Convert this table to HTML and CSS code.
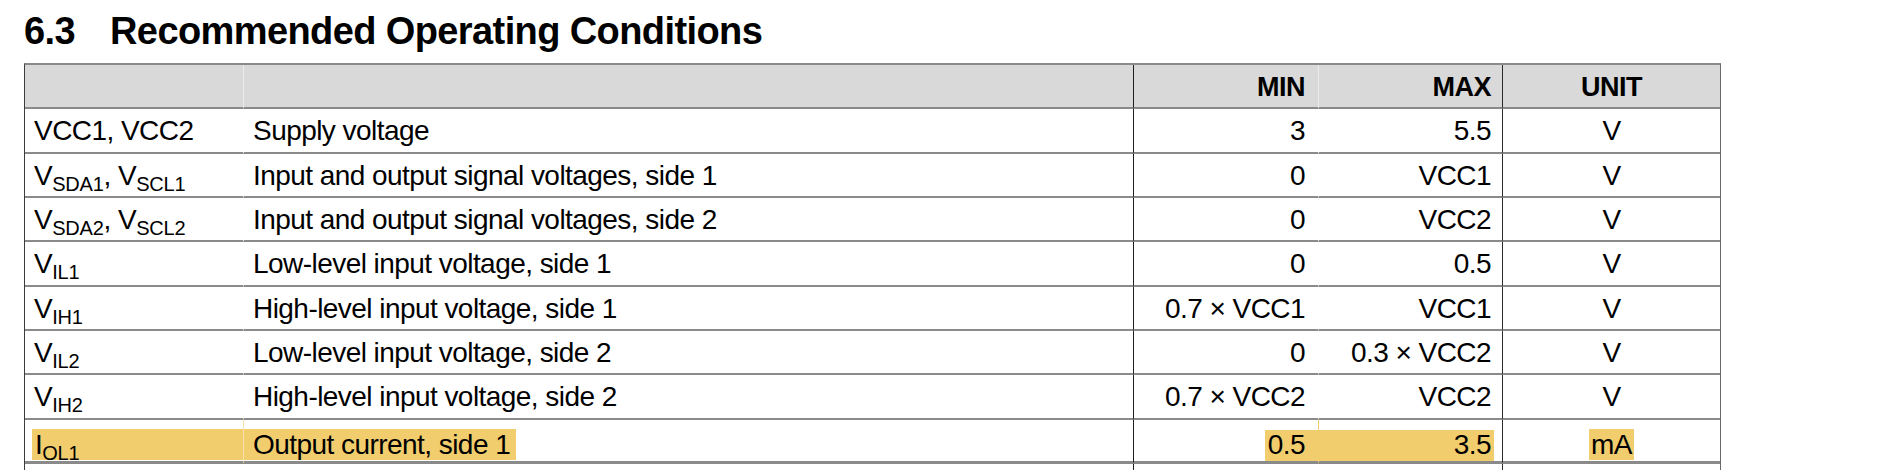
FILE: index.html
```html
<!DOCTYPE html>
<html lang="en">
<head>
<meta charset="utf-8">
<title>6.3 Recommended Operating Conditions</title>
<link rel="stylesheet" href="styles.css">
</head>
<body>
<div class="page">
  <h2 class="section-title"><span class="sec-num">6.3</span>Recommended Operating Conditions</h2>
  <table class="spec">
    <colgroup>
      <col class="c-sym"><col class="c-desc"><col class="c-min"><col class="c-max"><col class="c-unit">
    </colgroup>
    <thead>
      <tr>
        <th class="sym"></th>
        <th class="desc"></th>
        <th class="min">MIN</th>
        <th class="max">MAX</th>
        <th class="unit">UNIT</th>
      </tr>
    </thead>
    <tbody>
      <tr>
        <td class="sym">VCC1, VCC2</td>
        <td class="desc">Supply voltage</td>
        <td class="min">3</td>
        <td class="max">5.5</td>
        <td class="unit">V</td>
      </tr>
      <tr>
        <td class="sym">V<sub>SDA1</sub>, V<sub>SCL1</sub></td>
        <td class="desc">Input and output signal voltages, side 1</td>
        <td class="min">0</td>
        <td class="max">VCC1</td>
        <td class="unit">V</td>
      </tr>
      <tr>
        <td class="sym">V<sub>SDA2</sub>, V<sub>SCL2</sub></td>
        <td class="desc">Input and output signal voltages, side 2</td>
        <td class="min">0</td>
        <td class="max">VCC2</td>
        <td class="unit">V</td>
      </tr>
      <tr>
        <td class="sym">V<sub>IL1</sub></td>
        <td class="desc">Low-level input voltage, side 1</td>
        <td class="min">0</td>
        <td class="max">0.5</td>
        <td class="unit">V</td>
      </tr>
      <tr>
        <td class="sym">V<sub>IH1</sub></td>
        <td class="desc">High-level input voltage, side 1</td>
        <td class="min">0.7 × VCC1</td>
        <td class="max">VCC1</td>
        <td class="unit">V</td>
      </tr>
      <tr>
        <td class="sym">V<sub>IL2</sub></td>
        <td class="desc">Low-level input voltage, side 2</td>
        <td class="min">0</td>
        <td class="max">0.3 × VCC2</td>
        <td class="unit">V</td>
      </tr>
      <tr>
        <td class="sym">V<sub>IH2</sub></td>
        <td class="desc">High-level input voltage, side 2</td>
        <td class="min">0.7 × VCC2</td>
        <td class="max">VCC2</td>
        <td class="unit">V</td>
      </tr>
      <tr class="marked">
        <td class="sym"><span class="hl hl-sym">I<sub>OL1</sub></span></td>
        <td class="desc"><span class="hl hl-desc">Output current, side 1</span></td>
        <td class="min">0.5</td>
        <td class="max">3.5</td>
        <td class="unit"><span class="hl hl-unit">mA</span></td>
      </tr>
      <tr class="next">
        <td class="sym"></td>
        <td class="desc"></td>
        <td class="min"></td>
        <td class="max"></td>
        <td class="unit"></td>
      </tr>
    </tbody>
  </table>
</div>
</body>
</html>
```

FILE: styles.css
```css
html, body {
  margin: 0;
  padding: 0;
  background: #ffffff;
}

body {
  font-family: "Liberation Sans", Arial, Helvetica, sans-serif;
  color: #000;
}

.page {
  padding: 11px 0 0 24px;
}

.section-title {
  margin: 0 0 12px 0;
  font-size: 38px;
  line-height: 40px;
  font-weight: bold;
  letter-spacing: -0.6px;
  color: #000;
  white-space: nowrap;
}

.sec-num {
  display: inline-block;
  width: 86px;
}

.spec {
  border-collapse: separate;
  border-spacing: 0;
  table-layout: fixed;
  width: 1695px;
  font-size: 28px;
  letter-spacing: -0.55px;
  border-top: 2px solid #8a8a8a;
  border-left: 1px solid #3c3c3c;
  border-right: 1px solid #6a6a6a;
}

.c-sym { width: 218px; }
.c-desc { width: 890px; }
.c-min { width: 185px; }
.c-max { width: 184px; }
.c-unit { width: 218px; }

.spec th,
.spec td {
  height: 42.33px;
  padding: 2px 0 0 0;
  border-bottom: 2px solid #8a8a8a;
  vertical-align: middle;
  white-space: nowrap;
  box-sizing: border-box;
}

.spec tr { height: 44.33px; }

.spec th {
  background: #d9d9d9;
  font-weight: bold;
  font-size: 27px;
  letter-spacing: -0.5px;
}

.spec .sym {
  text-align: left;
  padding-left: 9px;
}

.spec .desc {
  text-align: left;
  padding-left: 9px;
  border-left: 1px solid #ffffff;
}

.spec th.desc {
  border-left: 1px solid #ececec;
}

.spec .min {
  text-align: right;
  padding-right: 13px;
  border-left: 1px solid #1e1e1e;
}

.spec .max {
  text-align: right;
  padding-right: 11px;
  border-left: 1px solid #ffffff;
}

.spec th.max {
  border-left: 1px solid #ececec;
}

.spec .unit {
  text-align: center;
  border-left: 1px solid #2a2a2a;
}

.spec sub {
  font-size: 20px;
  vertical-align: -6px;
  line-height: 0;
  letter-spacing: -0.2px;
}

/* highlighted row */
.spec .marked td {
  border-bottom-width: 3px;
  padding-top: 9px;
}

.hl {
  background: #f2cd6d;
  display: inline-block;
  line-height: 31px;
  height: 31px;
}

.spec .marked .sym {
  padding-left: 7px;
}

.hl-sym {
  display: block;
  padding-left: 3px;
}

.spec .marked .desc {
  padding-left: 0;
  border-left-color: #f7e2aa;
}

.hl-desc {
  padding-left: 9px;
  padding-right: 6px;
}

.spec .marked .min {
  background-image: linear-gradient(#f2cd6d, #f2cd6d);
  background-repeat: no-repeat;
  background-size: 53px 31px;
  background-position: right 0 top 10px;
}

.spec .marked .max {
  padding-right: 11px;
  border-left-color: #f2cd6d;
  background-image: linear-gradient(#f2cd6d, #f2cd6d);
  background-repeat: no-repeat;
  background-size: calc(100% - 8px) 31px;
  background-position: left 0 top 10px;
}

.hl-unit {
  padding: 0 2px;
}

.spec .next td {
  border-bottom: none;
}
```
